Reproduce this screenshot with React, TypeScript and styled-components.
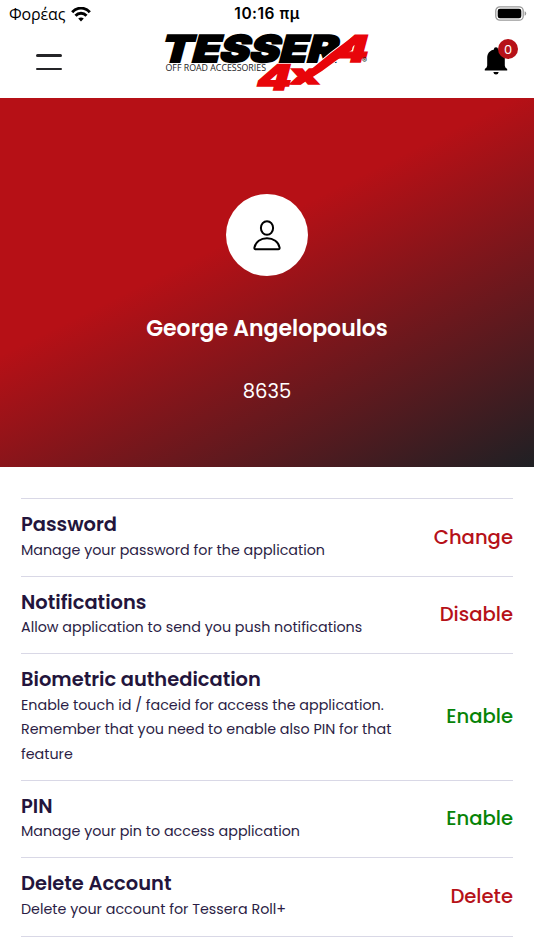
import React from "react";
import styled, { createGlobalStyle } from "styled-components";

const GlobalStyle = createGlobalStyle`
  * { box-sizing: border-box; }
  body {
    margin: 0;
    background: #fff;
    color: #23153c;
    font-family: Poppins, Inter, "Noto Sans", sans-serif;
    overflow: hidden;
  }
`;

const Screen = styled.main`
  width: 534px;
  height: 950px;
  display: flex;
  flex-direction: column;
  background: #fff;
`;

const StatusBar = styled.div`
  height: 28px;
  flex: none;
  display: grid;
  grid-template-columns: 1fr auto 1fr;
  align-items: center;
  padding: 0 7px 0 9px;
  color: #000;
`;

const Carrier = styled.div`
  display: flex;
  align-items: center;
  gap: 6px;
  font: 400 16px/26px "Open Sans", sans-serif;
  letter-spacing: -0.15px;
`;

const Clock = styled.div`
  font: 600 15.5px/26px Inter, sans-serif;
  letter-spacing: 0.5px;
  padding-right: 2px;
`;

const BatterySlot = styled.div`
  display: flex;
  justify-content: flex-end;
  padding-bottom: 2px;
`;

const Header = styled.header`
  height: 70px;
  flex: none;
  display: grid;
  grid-template-columns: 165px 1fr 165px;
`;

const MenuButton = styled.button`
  width: 26px;
  height: 16px;
  margin: 26px 0 0 36px;
  padding: 0;
  border: 0;
  background: none;
  display: flex;
  flex-direction: column;
  justify-content: space-between;

  &::before,
  &::after {
    content: "";
    height: 2.5px;
    border-radius: 2px;
    background: #242427;
  }
`;

const LogoSvg = styled.svg`
  display: block;
  overflow: visible;
`;

const BellButton = styled.button`
  position: relative;
  justify-self: end;
  width: 24px;
  height: 28px;
  margin: 19px 26px 0 0;
  padding: 0;
  border: 0;
  background: none;
`;

const Badge = styled.span`
  position: absolute;
  left: 14px;
  top: -8px;
  width: 20px;
  height: 20px;
  border-radius: 50%;
  background: #b61118;
  color: #fff;
  font: 400 13px/21px Poppins, sans-serif;
  text-align: center;
`;

const Hero = styled.section`
  height: 369px;
  flex: none;
  display: flex;
  flex-direction: column;
  align-items: center;
  padding-top: 95.5px;
  color: #fff;
  background: linear-gradient(153.5deg, #b61016 40.5%, #1f2024 100%);
`;

const Avatar = styled.div`
  width: 82.5px;
  height: 82.5px;
  border-radius: 50%;
  background: #fff;
  display: flex;
  align-items: center;
  justify-content: center;
`;

const UserName = styled.h1`
  margin: 38px 0 0;
  font-size: 22px;
  font-weight: 600;
  line-height: 30px;
`;

const UserCode = styled.div`
  margin-top: 33px;
  font-size: 19.5px;
  line-height: 30px;
`;

const Settings = styled.ul`
  list-style: none;
  margin: 31.1px 21px 0;
  padding: 0;
`;

const SettingRow = styled.li`
  display: flex;
  align-items: center;
  justify-content: space-between;
  border-top: 1px solid #d9d8e6;
  padding: 14px 0 13.5px;

  &:last-child {
    border-bottom: 1px solid #d9d8e6;
    padding-bottom: 14.5px;
  }
`;

const SettingText = styled.div`
  width: 384px;
`;

const Title = styled.h2`
  margin: 0;
  padding-bottom: 0.6px;
  font-size: 19.45px;
  font-weight: 600;
  line-height: 23.9px;
`;

const Description = styled.p`
  margin: 0;
  font-size: 14.3px;
  line-height: 24.5px;
  color: #2b1d45;
`;

const Action = styled.button<{ $positive?: boolean }>`
  padding: 0;
  border: 0;
  background: none;
  font: inherit;
  font-size: 19.6px;
  font-weight: 500;
  line-height: 29.5px;
  padding-bottom: 0.5px;
  color: ${(p) => (p.$positive ? "#078307" : "#b61118")};
`;

interface Setting {
  title: string;
  description: string;
  action: string;
  positive?: boolean;
}

const settings: Setting[] = [
  { title: "Password", description: "Manage your password for the application", action: "Change" },
  { title: "Notifications", description: "Allow application to send you push notifications", action: "Disable" },
  {
    title: "Biometric authedication",
    description:
      "Enable touch id / faceid for access the application. Remember that you need to enable also PIN for that feature",
    action: "Enable",
    positive: true,
  },
  { title: "PIN", description: "Manage your pin to access application", action: "Enable", positive: true },
  { title: "Delete Account", description: "Delete your account for Tessera Roll+", action: "Delete" },
];

const WifiIcon = () => (
  <svg width="20" height="15" viewBox="0 0 20 15" fill="none" stroke="#000" strokeWidth="2.9">
    <path d="M1.2 5.2C6-.2 14-.2 18.8 5.2" />
    <path d="M4.5 8.7C7.5 5.5 12.5 5.5 15.5 8.7" />
    <path d="M10 14.4 7.2 11.6Q10 9.3 12.8 11.6Z" fill="#000" stroke="none" />
  </svg>
);

const BatteryIcon = () => (
  <svg width="32" height="15" viewBox="0 0 32 15">
    <rect x="0.8" y="0.8" width="27.4" height="13.4" rx="4" fill="none" stroke="#999" strokeWidth="1.3" />
    <rect x="2.7" y="2.7" width="23.6" height="9.6" rx="2.2" fill="#000" />
    <path d="M29.6 5.2Q31.2 5.8 31.2 7.5T29.6 9.8Z" fill="#999" />
  </svg>
);

const BellIcon = () => (
  <svg width="24" height="28" viewBox="0 0 24 28">
    <path
      d="M12 0.3C10.7 0.3 10 1.1 10 2.5C5.8 3.4 3.2 6.5 3.2 10.8V18.5Q3.2 20.5 0.8 22V23.5H23.2V22Q20.8 20.5 20.8 18.5V10.8C20.8 6.5 18.2 3.4 14 2.5C14 1.1 13.3 0.3 12 0.3Z"
      fill="#000"
    />
    <path d="M9.3 25H14.7Q14.3 27.5 12 27.5T9.3 25Z" fill="#000" />
  </svg>
);

const PersonIcon = () => (
  <svg width="30" height="32" viewBox="0 -0.5 30 32" fill="none" stroke="#000" strokeWidth="2">
    <ellipse cx="15" cy="8.5" rx="6.1" ry="6.8" />
    <path
      d="M3.7 29.8Q2.2 29.8 2.4 28.2C3.4 22.3 8.7 18.7 15 18.7S26.6 22.3 27.6 28.2Q27.8 29.8 26.3 29.8Z"
      strokeLinejoin="round"
    />
  </svg>
);

const Logo = () => (
  <LogoSvg width="204" height="66" viewBox="165 28 204 66" fontFamily="Inter, sans-serif" fontWeight="900">
    <text
      transform="translate(159.500 61.700) skewX(-15)"
      fontSize="37"
      textLength="176"
      lengthAdjust="spacingAndGlyphs"
      fill="#000"
      stroke="#000"
      strokeWidth="1.8"
    >
      TESSER
    </text>
    <text
      x="165.500"
      y="71.300"
      fontFamily="'Open Sans', sans-serif"
      fontWeight="400"
      fontSize="9.800"
      textLength="100.500"
      lengthAdjust="spacingAndGlyphs"
      fill="#222"
    >
      OFF ROAD ACCESSORIES
    </text>
    <path
      d="M355 35 331 53 309 71 291 84.500H301L322 71 337 60 352 50Z"
      fill="#e8050a"
      stroke="#fff"
      strokeWidth="2"
      paintOrder="stroke"
    />
    <g fill="#e8050a" stroke="#e8050a" strokeWidth="1.4">
      <text transform="translate(331.500 61.700) skewX(-15)" fontSize="37" textLength="34.500" lengthAdjust="spacingAndGlyphs">
        4
      </text>
      <text transform="translate(254.500 90) skewX(-15)" fontSize="35" textLength="34.500" lengthAdjust="spacingAndGlyphs">
        4
      </text>
      <text transform="translate(290 84) skewX(-4)" fontSize="27.500" textLength="29" lengthAdjust="spacingAndGlyphs">
        x
      </text>
    </g>
    <text x="362" y="63" fontSize="7.500" fontWeight="600" fill="#222">
      ®
    </text>
  </LogoSvg>
);

export default function App() {
  return (
    <Screen>
      <GlobalStyle />
      <StatusBar>
        <Carrier>
          Φορέας
          <WifiIcon />
        </Carrier>
        <Clock>10:16 πμ</Clock>
        <BatterySlot>
          <BatteryIcon />
        </BatterySlot>
      </StatusBar>
      <Header>
        <MenuButton aria-label="Menu" />
        <Logo />
        <BellButton aria-label="Notifications">
          <BellIcon />
          <Badge>0</Badge>
        </BellButton>
      </Header>
      <Hero>
        <Avatar>
          <PersonIcon />
        </Avatar>
        <UserName>George Angelopoulos</UserName>
        <UserCode>8635</UserCode>
      </Hero>
      <Settings>
        {settings.map(({ title, description, action, positive }) => (
          <SettingRow key={title}>
            <SettingText>
              <Title>{title}</Title>
              <Description>{description}</Description>
            </SettingText>
            <Action $positive={positive}>{action}</Action>
          </SettingRow>
        ))}
      </Settings>
    </Screen>
  );
}
